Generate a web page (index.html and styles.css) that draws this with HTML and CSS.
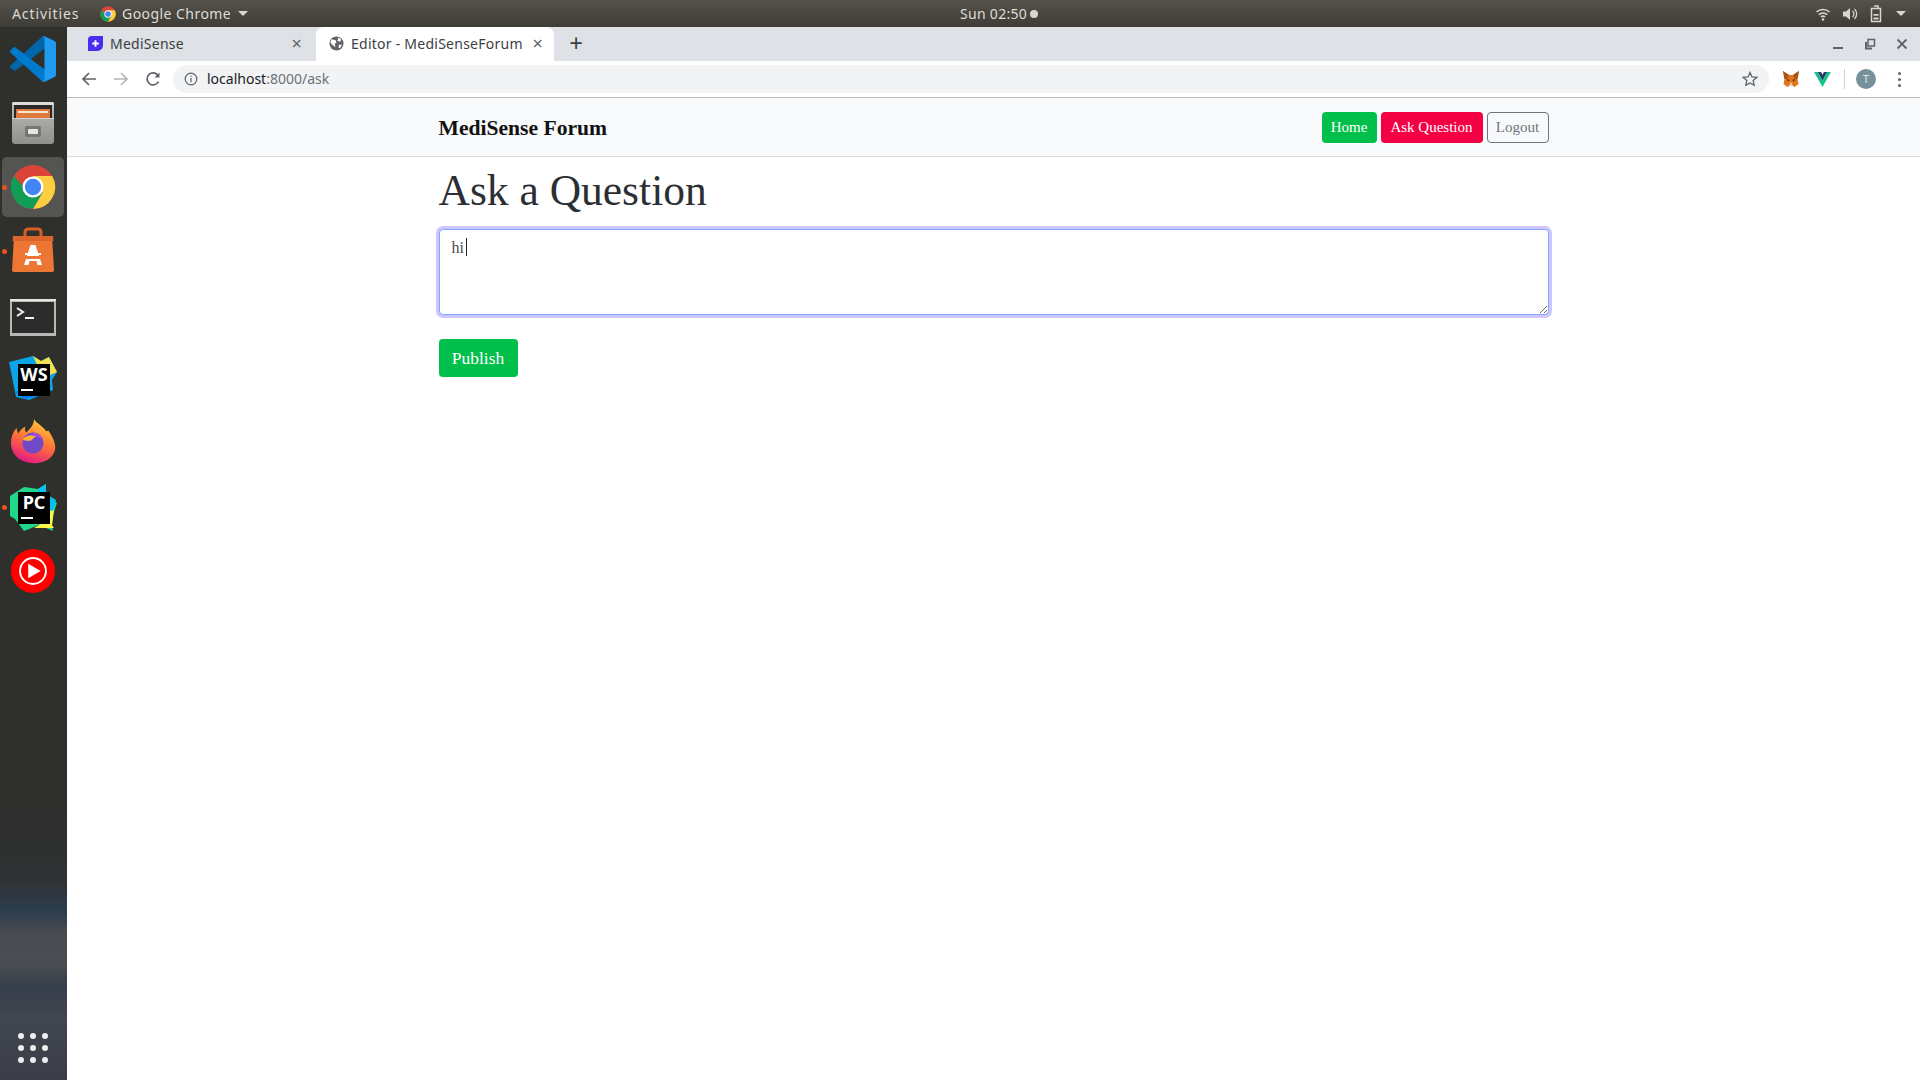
FILE: index.html
```html
<!DOCTYPE html>
<html lang="en">
<head>
    <meta charset="UTF-8">
    <title>Editor - MediSenseForum</title>
    <link rel="stylesheet" href="styles.css">
</head>
<body>
<div class="topbar">
    <span class="activities">Activities</span>
    <span class="app-menu">
        <svg class="app-chrome" viewBox="0 0 48 48"><use href="#chrome"/></svg>
        Google Chrome
        <i class="caret-down"></i>
    </span>
    <span class="clock">Sun 02:50<i class="clock-dot"></i></span>
    <span class="tray">
        <svg width="16" height="16" viewBox="0 0 16 16" fill="none" stroke="#d8d6d0" stroke-width="1.5"><path d="M1.5 6a9.5 9.5 0 0 1 13 0M3.8 8.6a6 6 0 0 1 8.4 0M6 11a3 3 0 0 1 4 0"/><circle cx="8" cy="13.5" r="1.3" fill="#d8d6d0" stroke="none"/></svg>
        <svg width="17" height="16" viewBox="0 0 17 16" fill="#d8d6d0"><path d="M1 5.5h3L8 2v12l-4-3.500H1z"/><path d="M10.500 5a4 4 0 0 1 0 6M12.500 3a7 7 0 0 1 0 10" fill="none" stroke="#d8d6d0" stroke-width="1.300"/></svg>
        <svg width="12" height="18" viewBox="0 0 12 18" fill="none" stroke="#d8d6d0" stroke-width="1.500"><path d="M1.500 3.500h9v13h-9zM4 1h4v2.500"/><path d="M3.500 9h5v1.800h-5zM3.500 12.500h5v2h-5z" fill="#d8d6d0" stroke="none"/></svg>
        <i class="caret-down tray-caret"></i>
    </span>
</div>

<div class="desktop">
    <nav class="dock">
        <div class="dock-item">
            <svg class="dock-icon" viewBox="0 0 100 100">
                <path fill="#0065a9" d="M96.500 10.800 75.900.9a6 6 0 0 0-6.800 1.200L1.400 63.600a4 4 0 0 0 0 6.100l5.500 5a4 4 0 0 0 5.300.3L93.300 13.500c2.700-2 6.700 0 6.700 3.400v-.5a6 6 0 0 0-3.500-5.600z"/>
                <path fill="#007acc" d="M96.500 89.200 75.900 99.100a6 6 0 0 1-6.800-1.200L1.400 36.400a4 4 0 0 1 0-6.100l5.500-5a4 4 0 0 1 5.300-.3l81.100 61.500c2.700 2 6.700 0 6.700-3.400v.5a6 6 0 0 1-3.500 5.600z"/>
                <path fill="#1f9cf0" d="M75.900 99.100a6 6 0 0 1-6.900-1.200c2.200 2.200 6 .6 6-2.500V4.600c0-3.100-3.800-4.700-6-2.500a6 6 0 0 1 6.900-1.200l20.600 9.900a6 6 0 0 1 3.500 5.600v67.200a6 6 0 0 1-3.500 5.400z"/>
            </svg>
        </div>
        <div class="dock-item">
            <svg class="dock-icon" viewBox="0 0 46 46">
                <defs>
                    <linearGradient id="cabinet" x1="0" y1="0" x2="0" y2="1">
                        <stop offset="0" stop-color="#bdbdbb"/>
                        <stop offset="1" stop-color="#8f8f8d"/>
                    </linearGradient>
                </defs>
                <rect x="2" y="2" width="42" height="42" rx="3" fill="url(#cabinet)"/>
                <rect x="2" y="2" width="42" height="3" rx="1.500" fill="#dcdcda"/>
                <rect x="4" y="5" width="38" height="13" fill="#2b2927"/>
                <rect x="6" y="9" width="34" height="9" fill="#e07a3a"/>
                <rect x="8" y="11" width="30" height="2" fill="#f5e9d8"/>
                <rect x="2" y="18" width="42" height="1" fill="#d2d2d0"/>
                <rect x="15" y="26" width="16" height="11" rx="2" fill="#767674"/>
                <rect x="18" y="29" width="10" height="5" rx="1" fill="#e6e6e4"/>
            </svg>
        </div>
        <div class="dock-item dock-active">
            <i class="running-dot"></i>
            <svg class="dock-icon" viewBox="0 0 48 48"><use href="#chrome"/></svg>
        </div>
        <div class="dock-item">
            <i class="running-dot"></i>
            <svg class="dock-icon" viewBox="0 1 46 46">
                <path d="M15 10V5a3 3 0 0 1 3-3h10a3 3 0 0 1 3 3v5" fill="none" stroke="#d85f28" stroke-width="3"/>
                <path d="M4 9h38l2 34a2 2 0 0 1-2 2H4a2 2 0 0 1-2-2z" fill="#ee7634"/>
                <path d="M3 9h40l.5 5h-41z" fill="#d9652a"/>
                <path d="M18.500 38 H14l6.500-20h5L32 38h-4.500l-1-4h-7z" fill="#fff"/>
                <rect x="12" y="29" width="22" height="3" fill="#ee7634"/>
                <rect x="15" y="26" width="16" height="2" fill="#fff"/>
            </svg>
        </div>
        <div class="dock-item">
            <svg class="dock-icon" viewBox="0 -2 46 46">
                <rect x="0" y="5" width="46" height="37" fill="#b9b9b7"/>
                <rect x="0" y="5" width="46" height="2" fill="#e4e4e2"/>
                <rect x="2" y="8" width="42" height="31" fill="#2c2c2c"/>
                <path d="M7 14l6 4-6 4" fill="none" stroke="#f2f2f2" stroke-width="2"/>
                <rect x="15" y="23" width="9" height="2" fill="#f2f2f2"/>
            </svg>
        </div>
        <div class="dock-item">
            <svg class="dock-icon ide-icon" viewBox="0 0 50 50">
                <path d="M1 8 25 2l8 5 8-4 8 15-5 8 1 10-24 10-13-3z" fill="#0aa5e6"/>
                <path d="M25 2l8 5 8-4 8 15-14 6z" fill="#f4e04a"/>
                <path d="M7 38l10 7 13-3-10-8z" fill="#087cfa"/>
                <rect x="10" y="10" width="32" height="32" fill="#000"/>
                <text x="26" y="27" class="ide-text">WS</text>
                <rect x="13" y="35" width="12" height="2" fill="#fff"/>
            </svg>
        </div>
        <div class="dock-item">
            <svg class="dock-icon" viewBox="0 2 48 48">
                <defs>
                    <linearGradient id="fox-body" x1="0.700" y1="0" x2="0.300" y2="1">
                        <stop offset="0" stop-color="#ffcf33"/>
                        <stop offset="0.500" stop-color="#ff7139"/>
                        <stop offset="1" stop-color="#e31587"/>
                    </linearGradient>
                </defs>
                <path d="M25 1c2 4 10 8 13 13 0 0 1-1 2-1 6 9 8 15 7 20-2 9-11 14-22 14C11 47 1 38 1 26 1 20 3 14 7 10c0 3 1 5 2 6 1-3 4-6 7-7-1 3 0 5 1 6 3-3 8-7 8-14z" fill="url(#fox-body)"/>
                <circle cx="24" cy="26" r="11" fill="#6e4ac6"/>
                <path d="M13 22c4-4 10-5 15-3-3 1-5 3-5 4-4 1-7 1-10-1z" fill="#ffb23a"/>
                <path d="M24 15a11 11 0 0 1 11 10c-3-5-8-7-12-6z" fill="#a24fd6"/>
            </svg>
        </div>
        <div class="dock-item">
            <i class="running-dot"></i>
            <svg class="dock-icon ide-icon" viewBox="0 0 50 50">
                <path d="M2 14l14-9 14 2 8-5-2 10 13 9-6 18 2 10-14-6-15 6-9-12-5-3z" fill="#21d789"/>
                <path d="M30 7l8-5v10l10 6-4 18-6-6z" fill="#07c3f2"/>
                <path d="M26 46l14-8 6 8z" fill="#fcf84a"/>
                <path d="M38 30l8-2-2 16-12 2z" fill="#fcf84a"/>
                <rect x="10" y="10" width="32" height="32" fill="#000"/>
                <text x="26" y="27" class="ide-text">PC</text>
                <rect x="13" y="35" width="12" height="2" fill="#fff"/>
            </svg>
        </div>
        <div class="dock-item">
            <svg class="dock-icon" viewBox="0 0 48 48">
                <circle cx="24" cy="24" r="23" fill="#f00"/>
                <circle cx="24" cy="24" r="13.500" fill="none" stroke="#fff" stroke-width="2"/>
                <path d="M19 16.500v15l13-7.500z" fill="#fff"/>
            </svg>
        </div>
        <div class="apps-grid">
            <i></i><i></i><i></i><i></i><i></i><i></i><i></i><i></i><i></i>
        </div>
    </nav>

    <div class="browser">
        <div class="tabstrip">
            <div class="tab">
                <svg class="tab-icon" viewBox="0 0 16 16"><path d="M4 0h12v10a6 6 0 0 1-6 6H0V4a4 4 0 0 1 4-4z" fill="#4a2df0"/><path d="M7 4.500h2V7h2.500v2H9v2.500H7V9H4.500V7H7z" fill="#fff"/></svg>
                <span class="tab-title">MediSense</span>
                <span class="tab-close">×</span>
            </div>
            <div class="tab tab-active">
                <svg class="tab-icon" viewBox="0 0 16 16"><circle cx="8" cy="8" r="7.500" fill="#5f6368"/><path d="M3 3.500l4 1 1 2.500-2 1.500 1 3.500L3 9 1.500 6zM10 1.500l3 2-1 2.500-3-1zM11 9l3 .5-2.500 3.500-1.500-1z" fill="#fff"/></svg>
                <span class="tab-title">Editor - MediSenseForum</span>
                <span class="tab-close">×</span>
            </div>
            <span class="new-tab">+</span>
            <div class="window-controls">
                <svg width="12" height="12" viewBox="0 0 12 12"><rect x="1" y="9" width="10" height="2" fill="#5f6368"/></svg>
                <svg width="12" height="12" viewBox="0 0 12 12" fill="none" stroke="#5f6368" stroke-width="1.500"><path d="M4 1.500h6.500V8H4z"/><path d="M2 4v6.500h6" stroke-width="2"/></svg>
                <svg width="12" height="12" viewBox="0 0 12 12" fill="none" stroke="#5f6368" stroke-width="1.800"><path d="M1.500 1.500l9 9M10.500 1.500l-9 9"/></svg>
            </div>
        </div>

        <div class="toolbar">
            <svg class="tool-btn" viewBox="0 0 16 16" fill="none" stroke="#5f6368" stroke-width="1.700"><path d="M15 8H2M8 2 2 8l6 6"/></svg>
            <svg class="tool-btn" viewBox="0 0 16 16" fill="none" stroke="#b4b6b9" stroke-width="1.700"><path d="M1 8h13M8 2l6 6-6 6"/></svg>
            <svg class="tool-btn" viewBox="0 0 16 16" fill="none" stroke="#5f6368" stroke-width="1.700"><path d="M13.500 10.500A6 6 0 1 1 13 4.500"/><path d="M14.500 1.500v5h-5z" fill="#5f6368" stroke="none"/></svg>
            <div class="omnibox">
                <svg class="info-icon" viewBox="0 0 14 14" fill="none" stroke="#5f6368" stroke-width="1.200"><circle cx="7" cy="7" r="5.800"/><path d="M7 6v4.200M7 3.800v1.300"/></svg>
                <span class="url">localhost<span class="url-rest">:8000/ask</span></span>
                <svg class="star-icon" viewBox="0 0 16 16" fill="none" stroke="#5f6368" stroke-width="1.300"><path d="M8 1.500l2 4.400 4.800.5-3.600 3.200 1 4.700L8 11.900l-4.200 2.400 1-4.700L1.200 6.400 6 5.900z"/></svg>
            </div>
            <div class="extensions">
                <svg class="ext-fox" viewBox="0 0 18 18">
                    <path d="M1 1l6 4h4l6-4-1.500 8 1 5-4 3-1.500-1H7l-1.500 1-4-3 1-5z" fill="#e2761b"/>
                    <path d="M1 1l6 4-2 4-2.500 0zM17 1l-6 4 2 4 2.500 0z" fill="#a8541a"/>
                    <path d="M7 16l2-4 2 4z" fill="#e4d7c8"/>
                    <path d="M5 9l2.500 1L6 11.500zM13 9l-2.500 1L12 11.500z" fill="#2b2320"/>
                </svg>
                <svg class="ext-vue" viewBox="0 0 18 16"><path d="M0 0h4l5 9 5-9h4L9 16z" fill="#10c48a"/><path d="M4 0h3.500L9 3l1.500-3H14L9 9z" fill="#2c3a66"/></svg>
                <i class="ext-divider"></i>
                <span class="avatar">T</span>
                <span class="kebab"><i></i><i></i><i></i></span>
            </div>
        </div>

        <div class="page">
            <header class="navbar">
                <div class="container navbar-inner">
                    <a class="brand">MediSense Forum</a>
                    <div class="nav-buttons">
                        <a class="btn btn-sm btn-green">Home</a>
                        <a class="btn btn-sm btn-red">Ask Question</a>
                        <a class="btn btn-sm btn-outline">Logout</a>
                    </div>
                </div>
            </header>
            <main class="container">
                <h1>Ask a Question</h1>
                <div class="editor">
                    <textarea class="question-input" rows="3">hi</textarea>
                    <i class="text-caret"></i>
                </div>
                <button class="btn btn-green btn-publish" type="button">Publish</button>
            </main>
        </div>
    </div>
</div>

<svg class="svg-defs" width="0" height="0">
    <defs>
        <symbol id="chrome" viewBox="0 0 48 48">
            <circle cx="24" cy="24" r="23" fill="#db4437"/>
            <path d="M24 24 4.100 35.500A23 23 0 0 1 4 12.500l10 11z" fill="#0f9d58"/>
            <path d="M4 35.400A23 23 0 0 0 24 47l10-17-10-6z" fill="#0f9d58"/>
            <path d="M24 47a23 23 0 0 0 20-34.500H24l10 17.500z" fill="#ffcd40"/>
            <circle cx="24" cy="24" r="11" fill="#fff"/>
            <circle cx="24" cy="24" r="8.500" fill="#4285f4"/>
        </symbol>
    </defs>
</svg>
</body>
</html>
```
FILE: styles.css
```css
* { box-sizing: border-box; }
html, body { margin: 0; height: 100%; overflow: hidden; }
body { display: flex; flex-direction: column; background: #fff; font-family: 'Noto Sans', sans-serif; }
i { display: block; font-style: normal; }
.svg-defs { position: absolute; }

/* ubuntu top bar */
.topbar {
    height: 27px; flex: none; position: relative; display: flex; align-items: center;
    background: linear-gradient(#55524b, #3e3c36); color: #dedcd6; font-size: 14px; padding-left: 12px;
}
.activities { width: 88px; letter-spacing: 0.9px; }
.app-menu { display: flex; align-items: center; gap: 5px; letter-spacing: 0.45px; }
.app-chrome { width: 16px; height: 16px; margin-right: 1px; }
.caret-down { width: 0; height: 0; border: 5px solid transparent; border-top: 5px solid #d8d6d0; border-bottom: 0; margin-left: 2px; }
.clock { position: absolute; left: 960px; display: flex; align-items: center; gap: 3px; letter-spacing: 0.3px; }
.clock-dot { width: 8px; height: 8px; border-radius: 50%; background: #d8d6d0; }
.tray { margin-left: auto; display: flex; align-items: center; gap: 11px; padding-right: 14px; }
.tray-caret { margin-left: 3px; }

.desktop { flex: 1; display: flex; min-height: 0; }

/* launcher */
.dock {
    width: 67px; flex: none; display: flex; flex-direction: column;
    background: linear-gradient(#2f2f2b 0, #2f2f2b 70%, #2f3233 81%, #2c3d4e 84%, #4a4b50 86%, #4b4d52 89%, #363f4c 91%, #41464f 94%, #3b3e46 100%);
}
.dock-item { height: 64px; display: flex; align-items: center; justify-content: center; position: relative; padding-right: 1px; }
.dock-icon { width: 46px; height: 46px; display: block; overflow: visible; }
.ide-icon { width: 50px; height: 50px; }
.dock-active { background: #545451; border-radius: 5px; margin: 2px 3px 2px 2px; height: 60px; }
.running-dot { position: absolute; left: 2px; top: 50%; width: 5px; height: 5px; margin-top: -2px; border-radius: 50%; background: #e9531e; }
.dock-active .running-dot { left: 0; }
.ide-text { font-family: 'Noto Sans', sans-serif; font-weight: 700; font-size: 18px; fill: #fff; text-anchor: middle; }
.apps-grid { margin: auto 0 17px 18px; width: 30px; display: grid; grid-template-columns: repeat(3, 6px); justify-content: space-between; row-gap: 6px; }
.apps-grid i { width: 6px; height: 6px; border-radius: 50%; background: #eee; }

.browser { flex: 1; min-width: 0; display: flex; flex-direction: column; }

/* tabs */
.tabstrip { height: 34px; flex: none; background: #dee1e6; display: flex; align-items: flex-end; color: #3c4043; font-size: 14px; padding-left: 8px; }
.tab { width: 238px; height: 34px; padding: 0 9px 2px 13px; display: flex; align-items: center; gap: 7px; letter-spacing: 0.25px; }
.tab-active { background: #fff; border-radius: 8px 8px 0 0; width: 238px; margin-left: 3px; }
.tab-icon { width: 15px; height: 15px; flex: none; }
.tab-title { flex: 1; white-space: nowrap; overflow: hidden; }
.tab-close { font-size: 18px; line-height: 1; color: #5f6368; padding: 0 2px; }
.new-tab { width: 44px; height: 34px; text-align: center; font-size: 24px; line-height: 32px; color: #3c4043; }
.window-controls { margin-left: auto; height: 34px; display: flex; align-items: center; gap: 20px; padding-right: 12px; }

/* address bar */
.toolbar { height: 37px; flex: none; background: #fff; display: flex; align-items: center; padding: 0 0 0 14px; border-bottom: 1px solid #b8b8b8; }
.tool-btn { width: 16px; height: 16px; margin-right: 16px; flex: none; }
.omnibox {
    width: 1596px; height: 28px; margin: -1px 0 0 -4px; background: #f1f3f4; border-radius: 14px; flex: none;
    display: flex; align-items: center; padding: 0 11px 0 11px; font-size: 14px; color: #202124;
}
.info-icon { width: 14px; height: 14px; margin-right: 9px; flex: none; }
.url-rest { color: #6d7175; }
.star-icon { width: 16px; height: 16px; margin-left: auto; }
.extensions { flex: 1; display: flex; align-items: center; padding-left: 13px; }
.ext-fox { width: 18px; height: 18px; }
.ext-vue { width: 17px; height: 15px; margin-left: 14px; }
.ext-divider { width: 1px; height: 20px; background: #cfd1d4; margin: 0 11px 0 13px; }
.avatar { width: 20px; height: 20px; border-radius: 50%; background: #78909c; color: #dfe6ea; font-size: 11px; text-align: center; line-height: 20px; }
.kebab { display: flex; flex-direction: column; gap: 3px; margin-left: 22px; }
.kebab i { width: 3px; height: 3px; border-radius: 50%; background: #5f6368; }

/* page */
.page { flex: 1; background: #fff; font-family: 'Liberation Serif', serif; color: #212529; }
.container { width: 1140px; margin: 0 auto; padding: 0 15px; }
.navbar { height: 59px; background: #f8f9fa; border-bottom: 1px solid #dcdcdc; }
.navbar-inner { height: 100%; display: flex; align-items: center; justify-content: space-between; }
.brand { font-size: 21.6px; font-weight: 700; color: #111; padding-top: 2px; }
.nav-buttons { display: flex; gap: 4px; }
.btn { display: inline-block; border: 1px solid transparent; border-radius: 4px; text-align: center; font-family: inherit; }
.btn-sm { font-size: 15px; line-height: 21px; height: 31px; padding: 4px 8px; }
.btn-green { background: #00c04b; color: #fff; }
.btn-red { background: #f30045; color: #fff; }
.btn-outline { border-color: #6c757d; color: #6c757d; }
.btn-sm.btn-green { width: 55px; }
.btn-sm.btn-red { width: 102px; }
.btn-sm.btn-outline { width: 62px; }

h1 { font-size: 43.5px; font-weight: 400; line-height: 48px; margin: 9px 0 15px; color: #2b2f33; }
.editor { position: relative; }
.question-input {
    display: block; width: 100%; height: 86px; padding: 6px 12px; resize: vertical;
    border: 1px solid #80a8ff; border-radius: 4px; box-shadow: 0 0 0 3px #d0c6ff; outline: none;
    font: 16px/24px 'Liberation Serif', serif; color: #495057;
}
.text-caret { position: absolute; left: 27px; top: 9px; width: 1px; height: 18px; background: #222; }
.btn-publish { margin-top: 24px; width: 79px; height: 38px; font-size: 17.5px; padding: 0; }
```
